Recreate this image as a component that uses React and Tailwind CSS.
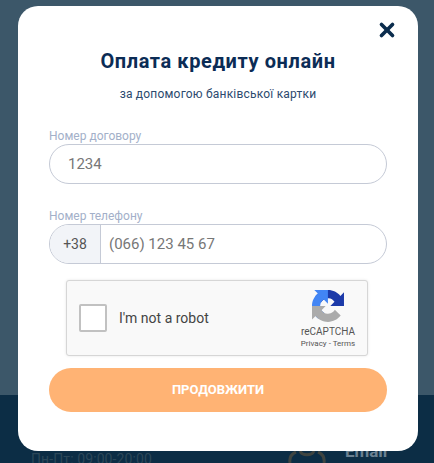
import { X } from 'lucide-react'

function RecaptchaLogo() {
  return (
    <svg width="32" height="32" viewBox="0 0 64 64" aria-hidden="true">
      <path d="M64 31.955l-.033-1.37V4.687l-7.16 7.16C50.948 4.674 42.033.093 32.05.093c-10.4 0-19.622 4.96-25.458 12.64l11.736 11.86a15.55 15.55 0 0 1 4.754-5.334c2.05-1.6 4.952-2.906 8.968-2.906.485 0 .86.057 1.135.163 4.976.393 9.288 3.14 11.828 7.124l-8.307 8.307 26.2.004" fill="#1c3aa9" />
      <path d="M31.862 0l-1.37.033H4.594l7.16 7.16C4.58 13.05 0 21.965 0 31.95c0 10.4 4.96 19.622 12.64 25.458l11.86-11.736a15.55 15.55 0 0 1-5.334-4.754c-1.6-2.05-2.906-4.952-2.906-8.968 0-.485.057-.86.163-1.135.393-4.976 3.14-9.288 7.124-11.828l8.307 8.307.004-26.2" fill="#4285f4" />
      <path d="M.001 31.955l.033 1.37v25.9l7.16-7.16c5.86 7.173 14.775 11.754 24.76 11.754 10.4 0 19.622-4.96 25.458-12.64l-11.736-11.86a15.55 15.55 0 0 1-4.754 5.334c-2.05 1.6-4.952 2.906-8.968 2.906-.485 0-.86-.057-1.135-.163-4.976-.393-9.288-3.14-11.828-7.124l8.307-8.307-26.2-.004" fill="#ababab" />
    </svg>
  )
}

export default function App() {
  return (
    <div className="relative h-[463px] w-[434px] overflow-hidden font-['Roboto',sans-serif]">
      <div className="h-[395px] bg-[#3c5769]" />
      <div className="flex h-[68px] items-start bg-[#0c2d45] pl-[31px]">
        <span className="mt-[56px] whitespace-nowrap text-sm leading-[16px] tracking-[0.1px] text-[#2b4759]">Пн-Пт: 09:00-20:00</span>
        <svg className="ml-[135px] mt-[56px]" width="40" height="12" viewBox="0 0 40 12" fill="none" stroke="#3f4440" strokeWidth="3">
          <path d="M9 1 C4 3 2 6 3 12" />
          <path d="M31 1 C36 3 38 6 37 12" />
          <path d="M13 0 C15 5 25 5 27 0" />
        </svg>
        <span className="ml-[18px] mt-[46px] text-[17px] font-bold leading-[20px] text-[#6b8192]">Email</span>
      </div>

      <div className="absolute left-[18px] top-[6px] h-[445px] w-[400px] rounded-[20px] bg-white px-[31px]">
        <button className="absolute right-[20px] top-[13px] text-[#0b2c4d]">
          <X size={22} strokeWidth={4} />
        </button>
        <h1 className="mt-[42px] text-center text-xl font-bold leading-[26px] tracking-[0.6px] text-[#0b2c55]">
          Оплата кредиту онлайн
        </h1>
        <p className="mt-[12px] text-center text-xs leading-[16px] tracking-[0.2px] text-[#2c4a6e]">за допомогою банківської картки</p>

        <label className="mt-[27px] block text-xs leading-[14px] text-[#a3b0c9]">Номер договору</label>
        <div className="mt-[1px] flex h-[40px] items-center rounded-[20px] border border-[#c5cad6] pl-[18px] text-[15px] text-[#777]">
          1234
        </div>

        <label className="mt-[25px] block text-xs leading-[14px] text-[#a3b0c9]">Номер телефону</label>
        <div className="mt-[1px] flex h-[40px] items-center overflow-hidden rounded-[20px] border border-[#c5cad6] text-[15px] text-[#777]">
          <span className="flex h-full w-[51px] items-center justify-center border-r border-[#c5cad6] bg-[#f2f4f8] text-sm text-[#555]">+38</span>
          <span className="pl-[8px]">(066) 123 45 67</span>
        </div>

        <div className="ml-[17px] mt-[16px] flex h-[76px] w-[302px] items-center rounded-[3px] border border-[#d6d6d6] bg-[#f9f9f9] pl-[12px] shadow-[0_0_3px_rgba(0,0,0,0.1)]">
          <span className="h-[28px] w-[28px] rounded-[2px] border-2 border-[#c1c1c1] bg-white" />
          <span className="ml-[12px] text-sm text-[#444]">I'm not a robot</span>
          <div className="ml-auto flex w-[70px] flex-col items-center pr-[8px] pt-[3px]">
            <RecaptchaLogo />
            <span className="mt-[4px] text-[10px] leading-[12px] text-[#555]">reCAPTCHA</span>
            <span className="mt-[1px] text-[8px] leading-[10px] text-[#555]">Privacy - Terms</span>
          </div>
        </div>

        <button className="mt-[12px] flex h-[44px] w-full items-center justify-center rounded-[22px] bg-[#ffb374] text-[13px] font-bold uppercase text-white">
          Продовжити
        </button>
      </div>
    </div>
  )
}
